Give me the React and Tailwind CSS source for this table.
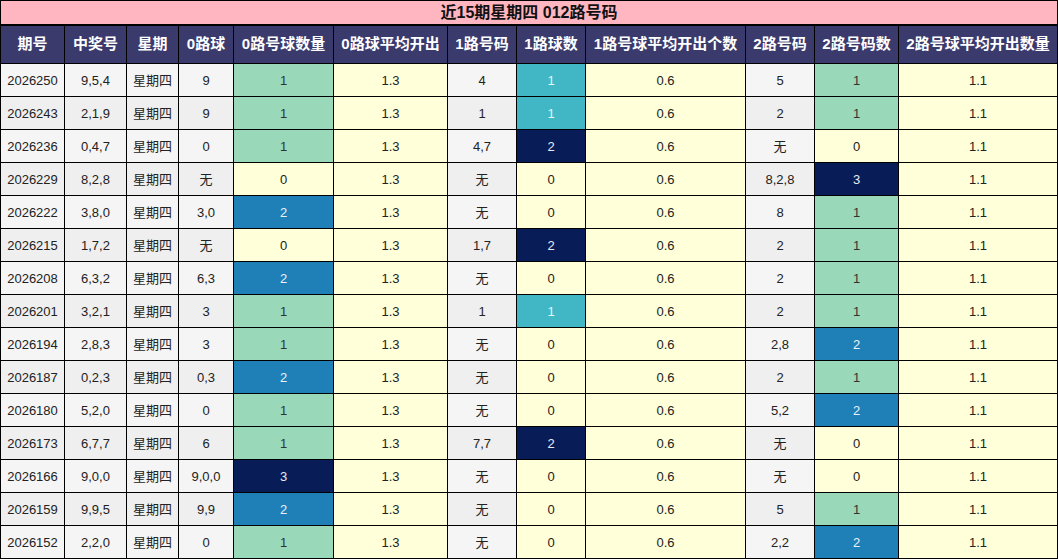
const HEADERS = ['期号', '中奖号', '星期', '0路球', '0路号球数量', '0路球平均开出', '1路号码', '1路球数', '1路号球平均开出个数', '2路号码', '2路号码数', '2路号球平均开出数量'];

// [期号, 中奖号, 0路球, 0路数, 1路号码, 1路数, 2路号码, 2路数]
const ROWS = [
  ['2026250', '9,5,4', '9', 1, '4', 1, '5', 1],
  ['2026243', '2,1,9', '9', 1, '1', 1, '2', 1],
  ['2026236', '0,4,7', '0', 1, '4,7', 2, '无', 0],
  ['2026229', '8,2,8', '无', 0, '无', 0, '8,2,8', 3],
  ['2026222', '3,8,0', '3,0', 2, '无', 0, '8', 1],
  ['2026215', '1,7,2', '无', 0, '1,7', 2, '2', 1],
  ['2026208', '6,3,2', '6,3', 2, '无', 0, '2', 1],
  ['2026201', '3,2,1', '3', 1, '1', 1, '2', 1],
  ['2026194', '2,8,3', '3', 1, '无', 0, '2,8', 2],
  ['2026187', '0,2,3', '0,3', 2, '无', 0, '2', 1],
  ['2026180', '5,2,0', '0', 1, '无', 0, '5,2', 2],
  ['2026173', '6,7,7', '6', 1, '7,7', 2, '无', 0],
  ['2026166', '9,0,0', '9,0,0', 3, '无', 0, '无', 0],
  ['2026159', '9,9,5', '9,9', 2, '无', 0, '5', 1],
  ['2026152', '2,2,0', '0', 1, '无', 0, '2,2', 2],
];

// scale for columns whose max is 3
const SCALE3 = {
  0: 'bg-[#ffffd9] text-[#222]',
  1: 'bg-[#99d8b9] text-[#333]',
  2: 'bg-[#1f80b8] text-[#e8f2f8]',
  3: 'bg-[#081d58] text-[#e8eaf2]',
};
// scale for 1路 (max 2)
const SCALE2 = {
  0: 'bg-[#ffffd9] text-[#222]',
  1: 'bg-[#41b6c4] text-[#e4f6f8]',
  2: 'bg-[#081d58] text-[#e8eaf2]',
};

const cell = 'flex items-center justify-center';
const dcell = cell + ' pt-[2px]';

function Gray({ odd, children }) {
  return <div className={dcell + ' ' + (odd ? 'bg-[#f5f5f5]' : 'bg-[#efefef]')}>{children}</div>;
}

function Yellow({ children }) {
  return <div className={dcell + ' bg-[#ffffd9]'}>{children}</div>;
}

export default function App() {
  return (
    <div className="w-[1058px] h-[559px] bg-black p-px text-[13px] text-[#222]" style={{ fontFamily: '"Liberation Sans", "Noto Sans CJK SC", sans-serif' }}>
      <div className="h-[23px] bg-[#ffb6c1] flex items-center justify-center font-bold text-[16px] text-[#111]">
        近15期星期四 012路号码
      </div>
      <div className="mt-[2px] grid gap-px grid-cols-[63px_61px_51px_54px_99px_113px_68px_68px_159px_68px_83px_158px] grid-rows-[37px_repeat(15,32px)]">
        {HEADERS.map((h) => (
          <div key={h} className={cell + ' bg-[#3b3a6d] text-white font-bold text-[15px] whitespace-nowrap'}>{h}</div>
        ))}
        {ROWS.map((r, i) => {
          const odd = i % 2 === 0;
          return [
            <Gray key={r[0] + 'a'} odd={odd}>{r[0]}</Gray>,
            <Gray key={r[0] + 'b'} odd={odd}>{r[1]}</Gray>,
            <Gray key={r[0] + 'c'} odd={odd}>星期四</Gray>,
            <Gray key={r[0] + 'd'} odd={odd}>{r[2]}</Gray>,
            <div key={r[0] + 'e'} className={dcell + ' ' + SCALE3[r[3]]}>{r[3]}</div>,
            <Yellow key={r[0] + 'f'}>1.3</Yellow>,
            <Gray key={r[0] + 'g'} odd={odd}>{r[4]}</Gray>,
            <div key={r[0] + 'h'} className={dcell + ' ' + SCALE2[r[5]]}>{r[5]}</div>,
            <Yellow key={r[0] + 'i'}>0.6</Yellow>,
            <Gray key={r[0] + 'j'} odd={odd}>{r[6]}</Gray>,
            <div key={r[0] + 'k'} className={dcell + ' ' + SCALE3[r[7]]}>{r[7]}</div>,
            <Yellow key={r[0] + 'l'}>1.1</Yellow>,
          ];
        })}
      </div>
    </div>
  );
}
